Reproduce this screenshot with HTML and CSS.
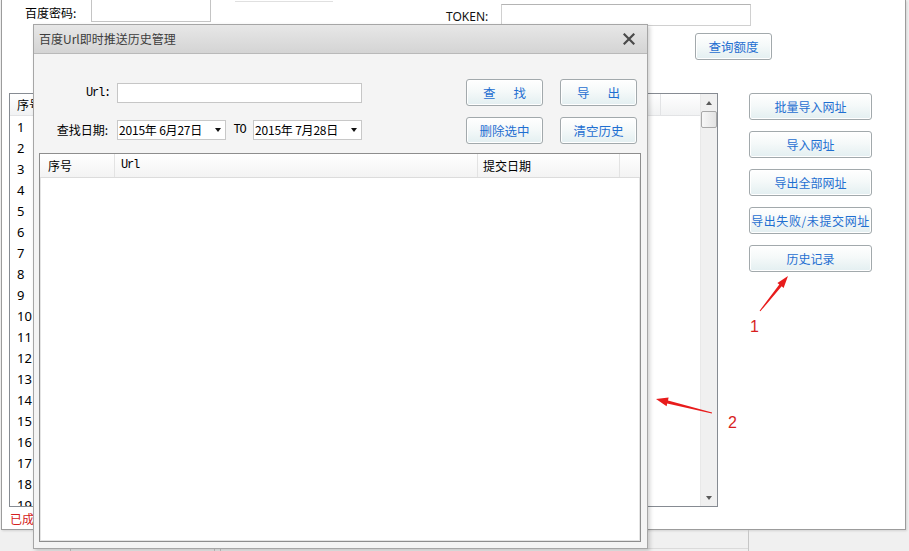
FILE: index.html
```html
<!DOCTYPE html>
<html lang="zh-CN">
<head>
<meta charset="utf-8">
<title>百度Url即时推送</title>
<link rel="stylesheet" href="styles.css">
</head>
<body>
<div class="screen">

  <!-- main tool window -->
  <div class="app">
    <div class="top-row">
      <span class="lbl lbl-pwd">百度密码:</span>
      <span class="field field-pwd"></span>
      <span class="field-ghost"></span>
      <span class="lbl lbl-token">TOKEN:</span>
      <span class="field field-token"></span>
    </div>

    <div class="quota-row">
      <button class="btn btn-quota">查询额度</button>
    </div>

    <div class="main-row">
      <div class="grid">
        <div class="grid-main">
          <div class="grid-head">
            <span class="gh gh-no">序号</span>
            <span class="gh gh-url">Url</span>
            <span class="gh gh-rest"></span>
          </div>
          <ol class="grid-rows">
            <li>1</li><li>2</li><li>3</li><li>4</li><li>5</li>
            <li>6</li><li>7</li><li>8</li><li>9</li><li>10</li>
            <li>11</li><li>12</li><li>13</li><li>14</li><li>15</li>
            <li>16</li><li>17</li><li>18</li><li>19</li>
          </ol>
        </div>
        <div class="vscroll">
          <span class="sb-btn sb-up"></span>
          <span class="sb-thumb"></span>
          <span class="sb-fill"></span>
          <span class="sb-btn sb-down"></span>
        </div>
      </div>

      <div class="side">
        <button class="btn btn-side">批量导入网址</button>
        <button class="btn btn-side">导入网址</button>
        <button class="btn btn-side">导出全部网址</button>
        <button class="btn btn-side btn-long">导出失败/未提交网址</button>
        <button class="btn btn-side">历史记录</button>
      </div>
    </div>

    <div class="status">已成功提交 0 条</div>
  </div>

  <!-- window edges behind the tool -->
  <div class="backdrop">
    <span class="bd-a"></span>
    <span class="bd-b"></span>
    <span class="bd-c"></span>
  </div>

  <!-- history dialog -->
  <div class="dialog">
    <div class="dlg-title">
      <span class="dlg-caption">百度Url即时推送历史管理</span>
      <svg class="dlg-close" width="12" height="12" viewBox="0 0 12 12">
        <path d="M1.5 1.5 L10.5 10.5 M10.5 1.5 L1.5 10.5" stroke="#4a4a4a" stroke-width="2.2" stroke-linecap="square" fill="none"/>
      </svg>
    </div>

    <div class="dlg-body">
      <div class="form-row">
        <div class="filters">
          <span class="f-lbl f-lbl-url">Url:</span>
          <span class="f-input"></span>
          <span class="f-lbl">查找日期:</span>
          <span class="f-dates">
            <span class="date"><span class="date-text">2015年 6月27日</span><span class="caret"></span></span>
            <span class="to">TO</span>
            <span class="date"><span class="date-text">2015年 7月28日</span><span class="caret"></span></span>
          </span>
        </div>
        <div class="actions">
          <button class="btn btn-dlg"><span class="wide">查找</span></button>
          <button class="btn btn-dlg"><span class="wide">导出</span></button>
          <button class="btn btn-dlg">删除选中</button>
          <button class="btn btn-dlg">清空历史</button>
        </div>
      </div>

      <div class="hist">
        <div class="hist-head">
          <span class="hc hc-no">序号</span>
          <span class="hc hc-url">Url</span>
          <span class="hc hc-date">提交日期</span>
          <span class="hc hc-fill"></span>
        </div>
      </div>
    </div>
  </div>

  <!-- red callouts -->
  <svg class="marks" width="909" height="551" viewBox="0 0 909 551">
    <polygon fill="#e81c1c" points="760.4,311.3 781.7,286.3 783.6,287.9 788,276 777.4,282.9 779.3,284.5 759.6,310.7"/>
    <polygon fill="#e81c1c" points="712.1,412.5 668.0,400.4 668.6,397.5 656,399 666.6,406.3 667.2,403.4 711.9,413.5"/>
    <text x="750" y="332" class="mark-num">1</text>
    <text x="728" y="428" class="mark-num">2</text>
  </svg>
</div>
</body>
</html>
```

FILE: styles.css
```css
* {
  box-sizing: border-box;
}

html,
body {
  margin: 0;
  padding: 0;
}

body {
  width: 909px;
  height: 551px;
  overflow: hidden;
  background: #f0f0f0;
  font-family: "Noto Sans CJK SC", "Noto Sans", sans-serif;
  font-size: 12px;
  color: #000;
}

.screen {
  position: relative;
  width: 909px;
  height: 551px;
}

/* ---------- main window ---------- */

.app {
  margin-left: 1px;
  width: 905px;
  height: 530px;
  background: #fff;
  border: 1px solid #9c9c9c;
  border-top: 0;
  box-shadow: 1px 1px 2px rgba(0, 0, 0, 0.12);
}

.top-row {
  display: flex;
  align-items: flex-start;
  height: 26px;
}

.lbl {
  line-height: 18px;
  white-space: nowrap;
}

.lbl-pwd {
  margin-left: 23px;
  width: 66px;
  margin-top: 4px;
}

.field {
  display: block;
  background: #fff;
  border: 1px solid #c4c4c4;
  border-top-color: #ababab;
}

.field-pwd {
  width: 120px;
  height: 23px;
  margin-top: -1px;
}

.field-ghost {
  display: block;
  margin-left: 24px;
  width: 98px;
  height: 2px;
  border-bottom: 1px solid #e0e0e0;
}

.lbl-token {
  margin-left: 113px;
  width: 55px;
  margin-top: 8px;
  font-family: "Noto Sans", sans-serif;
  color: #111;
}

.field-token {
  width: 250px;
  height: 22px;
  margin-top: 4px;
  border-color: #d0d0d0;
  border-top-color: #b4b4b4;
}

.quota-row {
  margin-top: 7px;
  padding-left: 693px;
  height: 27px;
}

/* shared button look */
.btn {
  display: block;
  margin: 0;
  padding: 0;
  font-family: "Noto Sans CJK SC", "Noto Sans", sans-serif;
  font-size: 12px;
  line-height: 25px;
  color: #1f6fd1;
  text-align: center;
  white-space: nowrap;
  background: linear-gradient(to bottom, #ffffff 0%, #f5f9f9 45%, #e3eff1 100%);
  border: 1px solid #a2a9ac;
  border-radius: 3px;
  box-shadow: inset 0 0 0 1px #ffffff;
}

.btn-quota {
  width: 77px;
  height: 27px;
  font-size: 12.5px;
}

.main-row {
  display: flex;
  align-items: flex-start;
  margin-top: 33px;
  padding-left: 7px;
}

.grid {
  display: flex;
  width: 709px;
  height: 414px;
  border: 1px solid #868b92;
  background: #fff;
}

.grid-main {
  flex: 1;
  display: flex;
  flex-direction: column;
  overflow: hidden;
}

.grid-head {
  display: flex;
  flex: none;
  height: 22px;
  background: linear-gradient(to bottom, #ffffff, #f1f2f3);
  border-bottom: 1px solid #e2e3e5;
}

.gh {
  line-height: 21px;
  padding-left: 7px;
  border-right: 1px solid #e2e3e5;
}

.gh-no {
  width: 60px;
}

.gh-url {
  width: 591px;
}

.gh-rest {
  flex: 1;
  border-right: 0;
}

.grid-rows {
  list-style: none;
  margin: 0;
  padding: 0;
}

.grid-rows li {
  height: 21px;
  line-height: 22px;
  padding-left: 7px;
  font-family: "Noto Sans", sans-serif;
  font-size: 13px;
}

.vscroll {
  display: flex;
  flex-direction: column;
  width: 17px;
  background: #f0f0f0;
  border-left: 1px solid #e8e8e8;
}

.sb-btn {
  display: flex;
  align-items: center;
  justify-content: center;
  height: 17px;
  flex: none;
}

.sb-up::before,
.sb-down::before {
  content: "";
  display: block;
  border-left: 3.5px solid transparent;
  border-right: 3.5px solid transparent;
}

.sb-up::before {
  border-bottom: 4px solid #5a5a5a;
}

.sb-down::before {
  border-top: 4px solid #5a5a5a;
}

.sb-thumb {
  display: block;
  flex: none;
  height: 17px;
  border: 1px solid #a8a8a8;
  border-radius: 2px;
  background: linear-gradient(to right, #f7f7f7, #e3e3e3);
}

.sb-fill {
  flex: 1;
}

.side {
  display: flex;
  flex-direction: column;
  gap: 11px;
  margin-left: 31px;
}

.btn-side {
  width: 123px;
  height: 27px;
}

.btn-long {
  letter-spacing: 0.6px;
}

.status {
  margin-top: 4px;
  padding-left: 8px;
  line-height: 16px;
  color: #d42020;
  white-space: nowrap;
}

/* ---------- edges of the window underneath ---------- */

.backdrop {
  display: flex;
  align-items: flex-end;
  height: 21px;
}

.bd-a {
  display: block;
  margin-left: 70px;
  width: 145px;
  height: 3px;
  border: 1px solid #c6c6c6;
  border-bottom: 0;
}

.bd-b {
  display: block;
  margin-left: 5px;
  width: 528px;
  height: 3px;
  border-left: 1px solid #c6c6c6;
  border-top: 1px solid #dadada;
}

.bd-c {
  display: block;
  width: 1px;
  height: 21px;
  background: #c6c6c6;
}

/* ---------- history dialog ---------- */

.dialog {
  position: absolute;
  left: 33px;
  top: 24px;
  width: 615px;
  height: 525px;
  display: flex;
  flex-direction: column;
  background: #f4f4f4;
  border: 1px solid #a6a6a6;
  box-shadow: 2px 2px 4px rgba(0, 0, 0, 0.18);
}

.dlg-title {
  flex: none;
  display: flex;
  align-items: center;
  justify-content: space-between;
  height: 29px;
  padding-left: 5px;
  background: linear-gradient(to bottom, #e7e7e7, #d4d4d4);
  border-bottom: 1px solid #b9b9b9;
  color: #3c3c3c;
}

.dlg-caption {
  line-height: 18px;
}

.dlg-close {
  display: block;
  margin-right: 12px;
}

.dlg-body {
  flex: 1;
  display: flex;
  flex-direction: column;
  padding: 25px 0 6px 0;
}

.form-row {
  display: flex;
  align-items: flex-start;
  flex: none;
}

.filters {
  display: grid;
  grid-template-columns: 83px 245px;
  grid-auto-rows: 20px;
  row-gap: 17px;
  margin-top: 4px;
}

.f-lbl {
  text-align: right;
  padding-right: 9px;
  line-height: 20px;
  white-space: nowrap;
}

.f-lbl-url {
  padding-right: 7px;
  font-family: "Liberation Mono", monospace;
  font-size: 12px;
  letter-spacing: -1.2px;
}

.f-input {
  display: block;
  background: #fff;
  border: 1px solid #c6c6c6;
}

.f-dates {
  display: flex;
  align-items: center;
}

.date {
  display: flex;
  align-items: center;
  justify-content: space-between;
  width: 109px;
  height: 20px;
  padding: 0 4px 0 1px;
  background: #fff;
  border: 1px solid #c8c8c8;
}

.date-text {
  white-space: pre;
  line-height: 18px;
  letter-spacing: -0.2px;
}

.caret {
  display: block;
  border-left: 3.5px solid transparent;
  border-right: 3.5px solid transparent;
  border-top: 4px solid #111;
}

.to {
  width: 27px;
  text-align: center;
  font-family: "Liberation Mono", monospace;
  font-size: 12px;
  letter-spacing: -1.2px;
}

.actions {
  display: grid;
  grid-template-columns: 77px 77px;
  grid-auto-rows: 27px;
  gap: 11px 17px;
  margin-left: 104px;
}

.btn-dlg {
  font-size: 12.5px;
}

.wide {
  letter-spacing: 18px;
  margin-right: -18px;
}

.hist {
  flex: 1;
  margin: 9px 6px 0 5px;
  background: #fff;
  border: 1px solid #8d8d8d;
  box-shadow: inset 0 0 0 1px #e4e4e4;
}

.hist-head {
  display: flex;
  height: 24px;
  background: linear-gradient(to bottom, #ffffff, #f3f3f3);
  border-bottom: 1px solid #dcdcdc;
}

.hc {
  line-height: 23px;
  border-right: 1px solid #e3e3e3;
  white-space: nowrap;
}

.hc-no {
  width: 75px;
  padding-left: 8px;
}

.hc-url {
  width: 363px;
  padding-left: 6px;
  font-family: "Liberation Mono", monospace;
  font-size: 12px;
  letter-spacing: -1.2px;
}

.hc-date {
  width: 142px;
  padding-left: 5px;
}

.hc-fill {
  flex: 1;
  border-right: 0;
}

/* ---------- callouts ---------- */

.marks {
  position: absolute;
  left: 0;
  top: 0;
  pointer-events: none;
}

.mark-num {
  font-family: "Liberation Sans", sans-serif;
  font-size: 16px;
  fill: #d81e1e;
}
```
